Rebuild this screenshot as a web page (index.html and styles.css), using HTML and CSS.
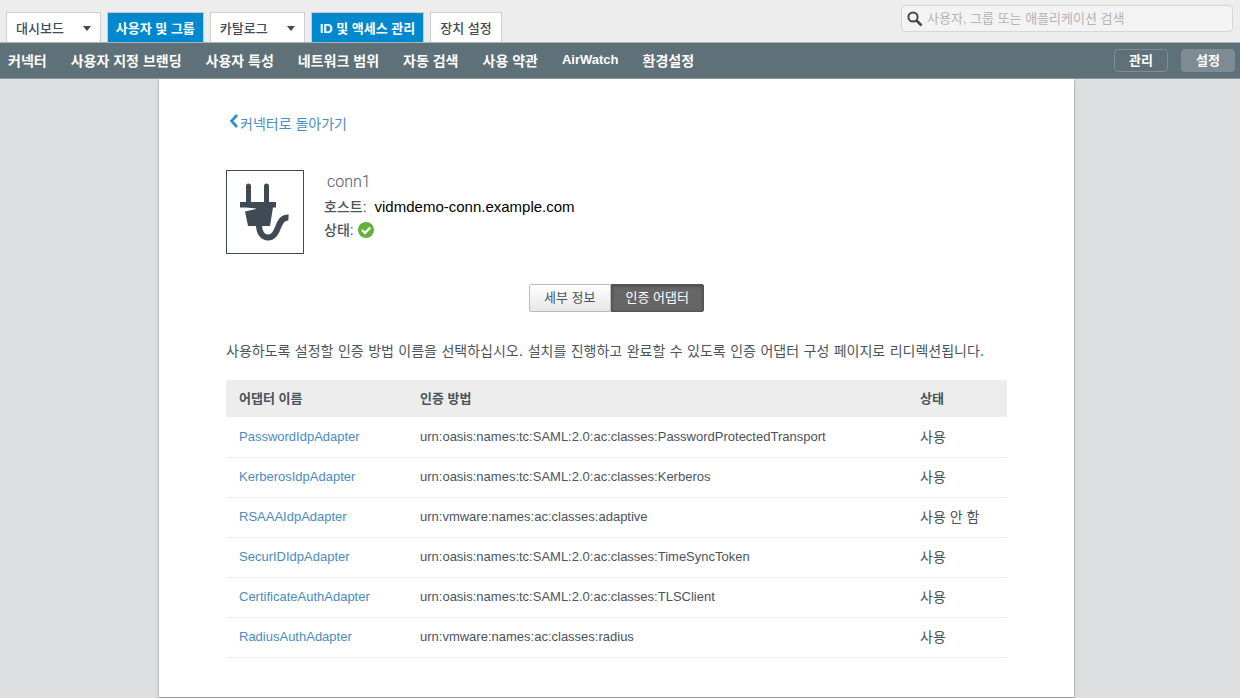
FILE: index.html
```
<!DOCTYPE html>
<html lang="ko">
<head>
<meta charset="utf-8">
<title>인증 어댑터</title>
<link rel="stylesheet" href="styles.css">
</head>
<body>
<header class="top">
  <nav class="tabs">
    <button class="tab tab-menu" type="button">대시보드<span class="caret"></span></button>
    <a class="tab active" href="#">사용자 및 그룹</a>
    <button class="tab tab-menu" type="button">카탈로그<span class="caret"></span></button>
    <a class="tab active" href="#">ID 및 액세스 관리</a>
    <a class="tab" href="#">장치 설정</a>
  </nav>
  <label class="search">
    <svg class="search-icon" viewBox="0 0 16 16" aria-hidden="true"><circle cx="6" cy="6" r="4.6" fill="none" stroke="#3f4a54" stroke-width="2"/><path d="M9.5 9.5L14.5 14.5" stroke="#3f4a54" stroke-width="2.6"/></svg>
    <input class="search-input" type="search" aria-label="검색" placeholder="사용자, 그룹 또는 애플리케이션 검색">
  </label>
</header>
<nav class="subnav">
  <div class="links">
    <a href="#">커넥터</a>
    <a href="#">사용자 지정 브랜딩</a>
    <a href="#">사용자 특성</a>
    <a href="#">네트워크 범위</a>
    <a href="#">자동 검색</a>
    <a href="#">사용 약관</a>
    <a class="latin" href="#">AirWatch</a>
    <a href="#">환경설정</a>
  </div>
  <div class="modes">
    <button class="mode" type="button">관리</button>
    <button class="mode on" type="button">설정</button>
  </div>
</nav>
<div class="stage">
  <main class="page">
    <a class="back" href="#"><svg class="chevron" viewBox="0 0 10 14" aria-hidden="true"><path d="M8 1L2.5 7L8 13" fill="none" stroke="#2f8bc9" stroke-width="2.6"/></svg>커넥터로 돌아가기</a>
    <section class="connector">
      <div class="plug">
        <svg class="plug-icon" viewBox="0 0 76 82" aria-hidden="true">
          <path d="M21.5 15V33M39.5 15V33" stroke="#3f4a54" stroke-width="5" stroke-linecap="round"/>
          <path d="M13 31H49V36.500H46L43 55H21L18 40.500L29 38V37.500L19 36.500H13Z" fill="#3f4a54"/>
          <path d="M32 54C32 62 36 66.500 41 66.500C53 66.500 49 46 61.500 46.500" fill="none" stroke="#3f4a54" stroke-width="6"/>
        </svg>
      </div>
      <div class="facts">
        <h1 class="name">conn1</h1>
        <div class="fact"><b>호스트:</b><span class="host">vidmdemo-conn.example.com</span></div>
        <div class="fact status"><b>상태:</b><svg class="ok" viewBox="0 0 16 16" role="img" aria-label="정상"><circle cx="8" cy="8" r="8" fill="#62b13b"/><path d="M4 8L7 11L12.200 5.500" fill="none" stroke="#fff" stroke-width="2.400"/></svg></div>
      </div>
    </section>
    <div class="switch">
      <button class="seg" type="button">세부 정보</button><button class="seg seg-on" type="button">인증 어댑터</button>
    </div>
    <p class="intro">사용하도록 설정할 인증 방법 이름을 선택하십시오. 설치를 진행하고 완료할 수 있도록 인증 어댑터 구성 페이지로 리디렉션됩니다.</p>
    <table class="adapters">
      <thead>
        <tr><th class="col-name">어댑터 이름</th><th>인증 방법</th><th class="col-state">상태</th></tr>
      </thead>
      <tbody>
        <tr><td><a href="#">PasswordIdpAdapter</a></td><td>urn:oasis:names:tc:SAML:2.0:ac:classes:PasswordProtectedTransport</td><td class="state">사용</td></tr>
        <tr><td><a href="#">KerberosIdpAdapter</a></td><td>urn:oasis:names:tc:SAML:2.0:ac:classes:Kerberos</td><td class="state">사용</td></tr>
        <tr><td><a href="#">RSAAAIdpAdapter</a></td><td>urn:vmware:names:ac:classes:adaptive</td><td class="state">사용 안 함</td></tr>
        <tr><td><a href="#">SecurIDIdpAdapter</a></td><td>urn:oasis:names:tc:SAML:2.0:ac:classes:TimeSyncToken</td><td class="state">사용</td></tr>
        <tr><td><a href="#">CertificateAuthAdapter</a></td><td>urn:oasis:names:tc:SAML:2.0:ac:classes:TLSClient</td><td class="state">사용</td></tr>
        <tr><td><a href="#">RadiusAuthAdapter</a></td><td>urn:vmware:names:ac:classes:radius</td><td class="state">사용</td></tr>
      </tbody>
    </table>
  </main>
</div>
</body>
</html>
```
FILE: styles.css
```
* { box-sizing: border-box; }
body {
  margin: 0;
  background: #dddee0;
  color: #4a545c;
  font: 14px/20px "Liberation Sans", "Noto Sans CJK KR", sans-serif;
}
a { text-decoration: none; color: #4a8cc2; }
button, input { font-family: inherit; }

.top {
  display: flex;
  justify-content: space-between;
  height: 43px;
  padding: 0 7px 0 6px;
  background: #ededed;
  border-bottom: 1px solid #aab2b5;
}
.tabs { display: flex; gap: 6px; align-items: flex-end; }
.tab {
  display: flex;
  align-items: center;
  height: 30px;
  padding: 2px 9px 0;
  border: 1px solid #cfcfcf;
  border-bottom: 0;
  background: #fff;
  color: #3f4a54;
  font-size: 13px;
  line-height: 20px;
  font-weight: 500;
  white-space: nowrap;
}
.tab-menu { gap: 19px; }
.caret { border: 4px solid transparent; border-top: 5px solid #3f4a54; border-bottom: 0; }
.tab.active { padding: 2px 8px 0; background: #0088ce; border-color: #cfc9c4; color: #fff; font-weight: 700; }

.search {
  display: flex;
  align-items: center;
  gap: 4px;
  width: 332px;
  height: 27px;
  margin-top: 5px;
  padding: 0 6px 0 5px;
  border: 1px solid #d6d6d6;
  border-radius: 4px;
  background: #f3f3f3;
}
.search-icon { width: 16px; height: 16px; flex: none; }
.search-input { flex: 1; min-width: 0; border: 0; padding: 0; background: none; font-size: 13px; line-height: 20px; outline: 0; }
.search-input::placeholder { color: #b4b4b4; }

.subnav {
  display: flex;
  justify-content: space-between;
  align-items: center;
  height: 36px;
  padding: 0 5px 0 8px;
  background: #5e7078;
  border-bottom: 1px solid #8b969b;
}
.links { display: flex; gap: 24px; padding-bottom: 2px; }
.links a { color: #fff; font-family: "Noto Sans CJK KR", sans-serif; font-weight: 700; white-space: nowrap; }
.links .latin { font-family: "Liberation Sans", sans-serif; font-size: 13px; }
.modes { display: flex; gap: 13px; }
.mode {
  width: 54px;
  height: 23px;
  padding: 0;
  border: 1px solid #7e8d94;
  border-radius: 4px;
  background: none;
  color: #fff;
  font-size: 13px;
  line-height: 20px;
  font-weight: 700;
}
.mode.on { background: #7e8b93; }

.stage { padding: 0 166px 1px 159px; }
.page {
  padding: 34px 67px 39px;
  background: #fff;
  box-shadow: 0 1px 2px #777;
  clip-path: inset(0 -4px -4px -4px);
}
.back { display: inline-flex; align-items: center; margin-left: 3px; gap: 1px; }
.chevron { width: 10px; height: 14px; margin-bottom: 6px; }

.connector { display: flex; gap: 20px; margin-top: 36px; }
.plug { width: 78px; height: 84px; border: 1px solid #3f4a54; }
.plug-icon { display: block; width: 76px; height: 82px; }
.name { margin: 2px 0 3px 3px; font: 300 16px/20px Roboto, sans-serif; }
.fact { display: flex; align-items: center; height: 23px; }
.fact b { font-weight: 500; }
.host { margin-left: 8px; color: #000; font-size: 15px; }
.status { gap: 4px; }
.ok { width: 16px; height: 16px; }

.switch { display: flex; justify-content: center; margin-top: 30px; }
.seg {
  height: 28px;
  padding: 0 14px;
  border: 1px solid #bcbcbc;
  border-radius: 2px 0 0 2px;
  background: linear-gradient(#fff, #e6e6e6);
  color: #4a545c;
  font-size: 13px;
  line-height: 20px;
}
.seg-on { border-color: #555; border-radius: 0 2px 2px 0; background: #666; color: #fff; box-shadow: inset 0 1px 3px #444; }

.intro { margin: 29px 0 19px; font-family: "DejaVu Sans", "Noto Sans CJK KR", sans-serif; }
.adapters { width: 100%; border-collapse: collapse; table-layout: fixed; }
.adapters th { height: 37px; padding: 0 13px; background: #ededed; font-size: 13px; text-align: left; }
.adapters td { height: 40px; padding: 0 13px; border-bottom: 1px solid #ececec; font-size: 13px; white-space: nowrap; }
.adapters .state { font-size: 14px; }
.col-name { width: 181px; }
.col-state { width: 100px; }
```
